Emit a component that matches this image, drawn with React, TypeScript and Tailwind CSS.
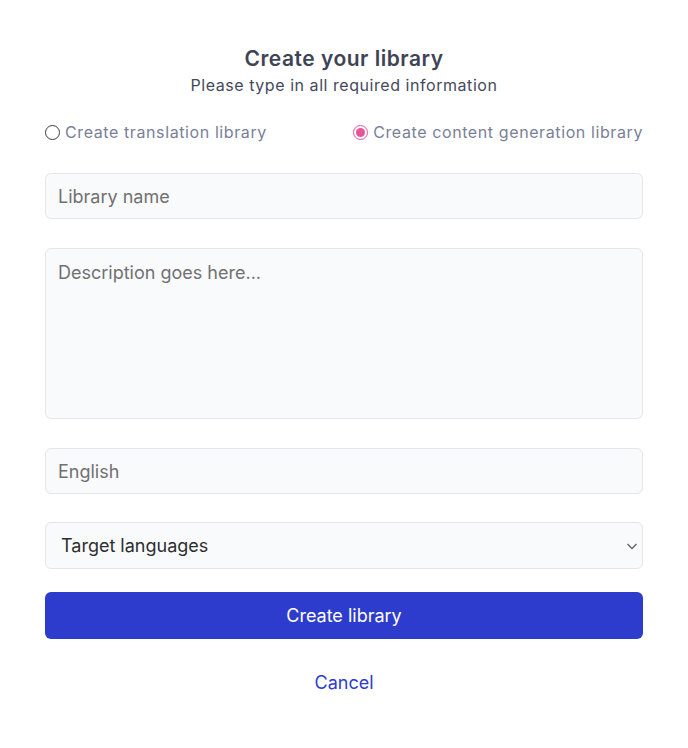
const inputBox =
  "w-full h-[46px] rounded-md border border-[#e3e5eb] bg-[#f9fafc] px-3 text-[18px] text-[#333] placeholder:text-[#717171] outline-none";

function Radio({ checked, label }: { checked?: boolean; label: string }) {
  return (
    <label className="flex items-center gap-[5px] cursor-pointer">
      {checked ? (
        <span className="w-[15px] h-[15px] rounded-full border-[1.5px] border-[#e5559a] flex items-center justify-center">
          <span className="w-[9px] h-[9px] rounded-full bg-[#e5559a]" />
        </span>
      ) : (
        <span className="w-[15px] h-[15px] rounded-full border-[1.5px] border-[#3d3d3d]" />
      )}
      <span className="text-[16px] text-[#7a7f98] tracking-[0.6px]">{label}</span>
    </label>
  );
}

export default function App() {
  return (
    <div className="min-h-screen bg-white font-['Inter',sans-serif]">
      <div className="px-[45px] pt-[45px] pb-10">
        <div className="text-center">
          <h1 className="text-[21px] leading-7 font-semibold text-[#3e4356] tracking-[0.5px]">
            Create your library
          </h1>
          <p className="text-[16px] leading-6 text-[#444a5c] tracking-[0.55px]">
            Please type in all required information
          </p>
        </div>

        <div className="flex items-center justify-between mt-[23px]">
          <Radio label="Create translation library" />
          <Radio checked label="Create content generation library" />
        </div>

        <div className="mt-[29px] flex flex-col">
          <input className={inputBox} placeholder="Library name" />
          <textarea
            className="mt-[29px] w-full h-[171px] resize-none rounded-md border border-[#e3e5eb] bg-[#f9fafc] px-3 pt-[10px] text-[18px] text-[#333] placeholder:text-[#717171] outline-none"
            placeholder="Description goes here..."
          />
          <input className={inputBox + " mt-[29px]"} placeholder="English" />
          <div className="relative mt-[28px]">
            <select className="appearance-none w-full h-[47px] rounded-md border border-[#e3e5eb] bg-[#f9fafc] pl-[15px] text-[18px] text-[#2e2e2e] outline-none">
              <option>Target languages</option>
            </select>
            <svg
              className="absolute right-[3px] top-1/2 -translate-y-1/2 pointer-events-none"
              width="16"
              height="16"
              viewBox="0 0 16 16"
              fill="none"
              stroke="#666"
              strokeWidth="1.4"
            >
              <path d="M3.5 6l4.5 4.5L12.5 6" />
            </svg>
          </div>
          <button className="mt-[23px] h-[47px] w-full rounded-md bg-[#2e3ccd] text-white text-[18px]">
            Create library
          </button>
          <button className="mt-[30px] mx-auto text-[18px] text-[#2e3ccd]">Cancel</button>
        </div>
      </div>
    </div>
  );
}
